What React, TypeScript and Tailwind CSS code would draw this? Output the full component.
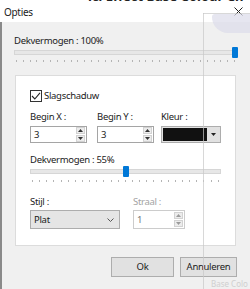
function Ticks({ count }: { count: number }) {
  return (
    <div className="flex justify-between h-[2px]">
      {Array.from({ length: count }).map((_, i) => (
        <div key={i} className="w-px h-[2px] bg-[#b4b4b4]" />
      ))}
    </div>
  );
}

function Slider({ pos }: { pos: number }) {
  return (
    <div className="relative h-[11px] flex items-center">
      <div className="w-full h-[5px] bg-[#e7e7e7] border border-[#d6d6d6]" />
      <div
        className="absolute top-0 w-[6px] h-[11px] bg-[#0078d7] rounded-[1px]"
        style={{ left: pos }}
      />
    </div>
  );
}

function Spin({ disabled }: { disabled?: boolean }) {
  const c = disabled ? "#9a9a9a" : "#333";
  return (
    <div className="flex flex-col gap-px w-[9px] ml-auto">
      <div className="h-[7px] bg-[#ececec] border border-[#d2d2d2] flex items-center justify-center">
        <svg width="5" height="3" viewBox="0 0 5 3">
          <path d="M0 3 L2.5 0 L5 3Z" fill={c} />
        </svg>
      </div>
      <div className="h-[7px] bg-[#ececec] border border-[#d2d2d2] flex items-center justify-center">
        <svg width="5" height="3" viewBox="0 0 5 3">
          <path d="M0 0 L2.5 3 L5 0Z" fill={c} />
        </svg>
      </div>
    </div>
  );
}

function NumBox({ value, w, disabled }: { value: string; w: string; disabled?: boolean }) {
  return (
    <div
      className={`flex items-center bg-white border pl-[3px] pr-px ${w} ${
        disabled ? "border-[#cccccc] text-[#777777]" : "border-[#a5a5a5] text-[#1b1b1b]"
      }`}
    >
      <span className="leading-[14px]">{value}</span>
      <Spin disabled={disabled} />
    </div>
  );
}

export default function App() {
  return (
    <div className="relative w-[250px] h-[289px] overflow-hidden bg-[#f0f0f0] text-[9.5px] tracking-[-0.3px] text-[#1b1b1b] font-['Noto_Sans',sans-serif]">
      {/* strip of the window behind */}
      <div className="h-[4px] bg-white overflow-hidden">
        <div className="-mt-[11px] pl-[88px] whitespace-nowrap text-[13px] leading-[15px] font-bold tracking-normal text-[#222]">
          ic. Effect Base Colour Ch
        </div>
      </div>

      {/* title bar */}
      <div className="h-[18px] bg-white flex items-start justify-between pl-[4px] pr-[7px]">
        <span className="leading-[17px] text-[10px]">Opties</span>
        <svg className="mt-[3px]" width="9" height="9" viewBox="0 0 9 9">
          <path d="M0.5 0.5 L8.5 8.5 M8.5 0.5 L0.5 8.5" stroke="#222" strokeWidth="1" />
        </svg>
      </div>

      {/* body */}
      <div className="h-[267px] border-l-2 border-[#8a8a8a] pl-[12px] pr-[14px] pt-[11px] flex flex-col">
        <div className="leading-[16px]">Dekvermogen : 100%</div>
        <div className="-mt-[2px]">
          <Slider pos={218} />
        </div>
        <div className="mt-[2px] pl-[2px] pr-px">
          <Ticks count={33} />
        </div>

        <div className="mt-[13px] ml-px bg-white border border-[#dcdcdc] pl-[14px] pr-[14px] pt-[12px] pb-[16px] flex flex-col">
          <div className="flex items-center gap-[2px] leading-[16px]">
            <div className="w-[12px] h-[12px] border border-[#333] flex items-center justify-center">
              <svg width="10" height="8" viewBox="0 0 10 8">
                <path d="M1 4 L3.8 7 L9 0.8" stroke="#222" strokeWidth="1.1" fill="none" />
              </svg>
            </div>
            <span>Slagschaduw</span>
          </div>

          <div className="mt-[5px] flex">
            <div className="flex flex-col w-[57px]">
              <span className="leading-[16px]">Begin X :</span>
              <div className="mt-px h-[17px] flex">
                <NumBox value="3" w="w-[57px]" />
              </div>
            </div>
            <div className="flex flex-col w-[57px] ml-[10px]">
              <span className="leading-[16px]">Begin Y :</span>
              <div className="mt-px h-[17px] flex">
                <NumBox value="3" w="w-[57px]" />
              </div>
            </div>
            <div className="flex flex-col w-[61px] ml-[7px]">
              <span className="leading-[16px]">Kleur :</span>
              <div className="mt-px h-[17px] flex items-center bg-[#e1e1e1] border border-[#adadad] pl-px">
                <div className="w-[44px] h-[13px] bg-[#111111]" />
                <div className="flex-1 flex justify-center">
                  <svg width="5" height="3" viewBox="0 0 5 3">
                    <path d="M0 0 L2.5 3 L5 0Z" fill="#222" />
                  </svg>
                </div>
              </div>
            </div>
          </div>

          <div className="mt-[9px] leading-[16px]">Dekvermogen : 55%</div>
          <div className="-mt-[2px]">
            <Slider pos={93} />
          </div>
          <div className="mt-[3px] pl-[2px] pr-[2px]">
            <Ticks count={27} />
          </div>

          <div className="mt-[12px] flex">
            <div className="flex flex-col w-[90px]">
              <span className="leading-[16px]">Stijl :</span>
              <div className="h-[19px] flex items-center justify-between bg-[#e5e5e5] border border-[#adadad] pl-[3px] pr-[5px]">
                <span className="leading-[14px]">Plat</span>
                <svg width="7" height="4" viewBox="0 0 7 4">
                  <path d="M0.5 0.5 L3.5 3.5 L6.5 0.5" stroke="#555" strokeWidth="1" fill="none" />
                </svg>
              </div>
            </div>
            <div className="flex flex-col w-[52px] ml-[13px]">
              <span className="leading-[16px] text-[#a3a3a3]">Straal :</span>
              <div className="h-[19px] flex">
                <NumBox value="1" w="w-[52px]" disabled />
              </div>
            </div>
          </div>
        </div>

        <div className="mt-[11px] flex justify-end gap-[6px] -mr-px">
          <button className="w-[63px] h-[20px] bg-[#e1e1e1] border border-[#adadad] leading-[16px]">
            Ok
          </button>
          <button className="w-[57px] h-[20px] bg-[#e1e1e1] border border-[#adadad] leading-[16px]">
            Annuleren
          </button>
        </div>
      </div>

      {/* bits of the window behind showing through */}
      <div className="pointer-events-none absolute left-[203px] top-[13px] w-px h-[276px] bg-[#c8c8c8]/70" />
      <div className="pointer-events-none absolute left-[203px] top-[13px] w-[47px] h-px bg-[#c8c8c8]/70" />
      <div className="pointer-events-none absolute left-[212px] top-[14px] w-[40px] h-[19px] bg-[#dcdcea]/70 rounded-bl-[22px] rounded-tl-[4px]" />
      <div className="pointer-events-none absolute left-[211px] top-[279px] text-[8px] leading-[9px] tracking-normal text-[#cfcfcf] whitespace-nowrap">
        Base Colo
      </div>
    </div>
  );
}
